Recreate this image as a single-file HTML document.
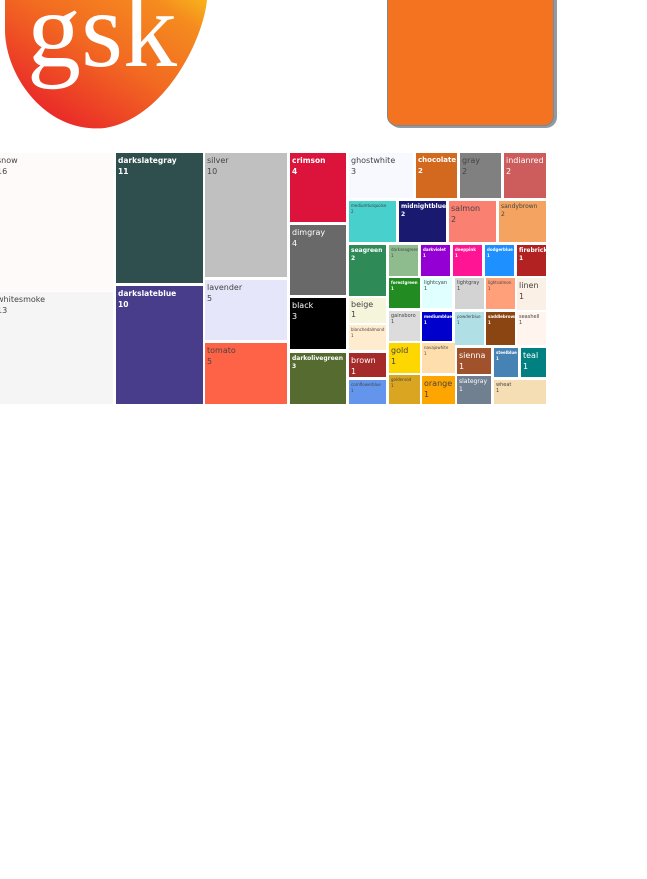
<!DOCTYPE html>
<html><head><meta charset="utf-8"><style>
body{margin:0;width:647px;height:879px;background:#fff;position:relative;overflow:hidden;font-family:"DejaVu Sans","Liberation Sans",sans-serif}
.b{position:absolute;box-sizing:border-box;padding:2px 2px;font-size:8px;line-height:11px;color:#444;overflow:hidden;white-space:nowrap}
.w{color:#fff;font-weight:bold;font-size:7.5px}
.s{font-size:4px;line-height:6px}
.m{font-size:6px;line-height:8px}
</style></head><body>
<svg style="position:absolute;left:0;top:0" width="220" height="135">
<defs><linearGradient id="g" x1="0.1" y1="0.9" x2="1" y2="0"><stop offset="0" stop-color="#e8202a"/><stop offset="0.5" stop-color="#f26a21"/><stop offset="0.85" stop-color="#f58b1f"/><stop offset="1" stop-color="#f8b41a"/></linearGradient></defs>
<path d="M5,0 L207,0 C203,40 165,118 105,128 C45,134 5,75 5,30 Z" fill="url(#g)"/>
<text x="27" y="66" font-family="Liberation Serif,serif" font-size="108" fill="#fff">gsk</text>
</svg>
<div style="position:absolute;left:389px;top:-10px;width:168px;height:138px;border-radius:11px;background:#8f9aa3"></div>
<div style="position:absolute;left:387px;top:-10px;width:167px;height:136px;border-radius:10px;background:#f37321;border:1px solid #7c8790;box-sizing:border-box"></div>

<div class="b" style="left:-5px;top:153px;width:118px;height:138px;background:#fffafa">snow<br>16</div>
<div class="b" style="left:-5px;top:292px;width:118px;height:112px;background:#f5f5f5">whitesmoke<br>13</div>
<div class="b w" style="left:116px;top:153px;width:87px;height:130px;background:#2f4f4f">darkslategray<br>11</div>
<div class="b w" style="left:116px;top:286px;width:87px;height:118px;background:#483d8b">darkslateblue<br>10</div>
<div class="b" style="left:205px;top:153px;width:82px;height:124px;background:#c0c0c0">silver<br>10</div>
<div class="b" style="left:205px;top:280px;width:82px;height:60px;background:#e6e6fa">lavender<br>5</div>
<div class="b" style="left:205px;top:343px;width:82px;height:61px;background:#ff6347">tomato<br>5</div>
<div class="b w" style="left:290px;top:153px;width:56px;height:69px;background:#dc143c">crimson<br>4</div>
<div class="b" style="left:290px;top:225px;width:56px;height:70px;background:#696969;color:#fff">dimgray<br>4</div>
<div class="b" style="left:290px;top:298px;width:56px;height:51px;background:#000;color:#fff">black<br>3</div>
<div class="b w m" style="left:290px;top:353px;width:56px;height:51px;background:#556b2f">darkolivegreen<br>3</div>

<div class="b" style="left:349px;top:153px;width:64px;height:45px;background:#f8f8ff">ghostwhite<br>3</div>
<div class="b w" style="left:416px;top:153px;width:41px;height:45px;background:#d2691e;font-size:7px">chocolate<br>2</div>
<div class="b" style="left:460px;top:153px;width:41px;height:45px;background:#808080">gray<br>2</div>
<div class="b" style="left:504px;top:153px;width:42px;height:45px;background:#cd5c5c;color:#fff">indianred<br>2</div>
<div class="b s" style="left:349px;top:201px;width:47px;height:41px;background:#48d1cc">mediumturquoise<br>2</div>
<div class="b w m" style="left:399px;top:201px;width:47px;height:41px;background:#191970">midnightblue<br>2</div>
<div class="b" style="left:449px;top:201px;width:47px;height:41px;background:#fa8072">salmon<br>2</div>
<div class="b m" style="left:499px;top:201px;width:47px;height:41px;background:#f4a460">sandybrown<br>2</div>
<div class="b w m" style="left:349px;top:245px;width:37px;height:51px;background:#2e8b57">seagreen<br>2</div>
<div class="b s" style="left:389px;top:245px;width:29px;height:31px;background:#8fbc8f">darkseagreen<br>1</div>
<div class="b w s" style="left:421px;top:245px;width:29px;height:31px;background:#9400d3">darkviolet<br>1</div>
<div class="b w s" style="left:453px;top:245px;width:29px;height:31px;background:#ff1493">deeppink<br>1</div>
<div class="b w s" style="left:485px;top:245px;width:29px;height:31px;background:#1e90ff">dodgerblue<br>1</div>
<div class="b w m" style="left:517px;top:245px;width:29px;height:31px;background:#b22222">firebrick<br>1</div>
<div class="b w s" style="left:389px;top:278px;width:31px;height:30px;background:#228b22">forestgreen<br>1</div>
<div class="b s" style="left:422px;top:278px;width:30px;height:30px;background:#e0ffff;font-size:5px">lightcyan<br>1</div>
<div class="b s" style="left:455px;top:278px;width:29px;height:31px;background:#d3d3d3;font-size:5px">lightgray<br>1</div>
<div class="b s" style="left:486px;top:278px;width:29px;height:31px;background:#ffa07a">lightsalmon<br>1</div>
<div class="b" style="left:517px;top:278px;width:29px;height:32px;background:#faf0e6">linen<br>1</div>
<div class="b m" style="left:349px;top:298px;width:37px;height:25px;background:#f5f5dc;font-size:8px;line-height:10px">beige<br>1</div>
<div class="b s" style="left:349px;top:325px;width:37px;height:25px;background:#ffebcd">blanchedalmond<br>1</div>
<div class="b s" style="left:389px;top:311px;width:31px;height:30px;background:#dcdcdc;font-size:5px">gainsboro<br>1</div>
<div class="b w s" style="left:422px;top:312px;width:30px;height:29px;background:#0000cd">mediumblue<br>1</div>
<div class="b s" style="left:455px;top:312px;width:29px;height:33px;background:#b0e0e6">powderblue<br>1</div>
<div class="b w s" style="left:486px;top:312px;width:29px;height:33px;background:#8b4513">saddlebrown<br>1</div>
<div class="b s" style="left:517px;top:312px;width:29px;height:33px;background:#fff5ee;font-size:5px">seashell<br>1</div>
<div class="b" style="left:389px;top:343px;width:31px;height:30px;background:#ffd700">gold<br>1</div>
<div class="b s" style="left:422px;top:343px;width:33px;height:30px;background:#ffdead">navajowhite<br>1</div>
<div class="b" style="left:349px;top:353px;width:37px;height:24px;background:#a52a2a;color:#fff">brown<br>1</div>
<div class="b s" style="left:349px;top:380px;width:37px;height:24px;background:#6495ed">cornflowerblue<br>1</div>
<div class="b s" style="left:389px;top:375px;width:31px;height:29px;background:#daa520">goldenrod<br>1</div>
<div class="b" style="left:422px;top:376px;width:33px;height:28px;background:#ffa500">orange<br>1</div>
<div class="b" style="left:457px;top:348px;width:34px;height:26px;background:#a0522d;color:#fff">sienna<br>1</div>
<div class="b m" style="left:457px;top:376px;width:34px;height:28px;background:#708090;color:#fff">slategray<br>1</div>
<div class="b w s" style="left:494px;top:348px;width:24px;height:29px;background:#4682b4">steelblue<br>1</div>
<div class="b" style="left:521px;top:348px;width:25px;height:29px;background:#008080;color:#fff">teal<br>1</div>
<div class="b s" style="left:494px;top:380px;width:52px;height:24px;background:#f5deb3;font-size:5px">wheat<br>1</div>
</body></html>
